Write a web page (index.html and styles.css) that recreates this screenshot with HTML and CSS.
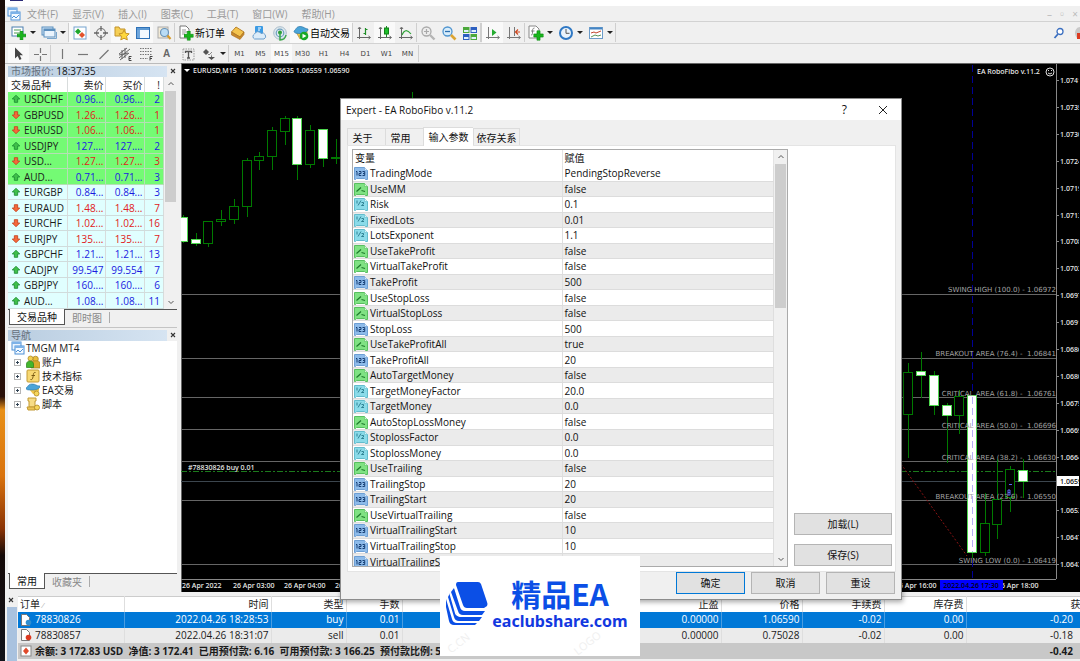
FILE: index.html
```html
<!DOCTYPE html>
<html lang="zh-CN">
<head>
<meta charset="utf-8">
<title>MetaTrader 4 - EURUSD,M15</title>
<link rel="stylesheet" href="styles.css">
</head>
<body>
<svg class="defs" aria-hidden="true">
  <symbol id="plus" viewBox="0 0 10 10"><path d="M3.500 0h3v3.500H10v3H6.500V10h-3V6.500H0v-3h3.500z" fill="#19b51c" stroke="#0a8a10" stroke-width=".7"/></symbol>
  <symbol id="i-newchart" viewBox="0 0 16 16"><rect x="1" y="2" width="11" height="9" fill="#fff" stroke="#4a7fae"/><path d="M3 5h7M3 8h6" stroke="#4b9a50"/><use href="#plus" x="6" y="6" width="9" height="9"/></symbol>
  <symbol id="i-profiles" viewBox="0 0 16 16"><rect x="1" y="2" width="11" height="8" fill="#cfe3f7" stroke="#5b8fbd"/><rect x="3" y="4" width="11" height="8" fill="#eaf4fd" stroke="#5b8fbd"/><path d="M3 5h11" stroke="#5b8fbd" stroke-width="2"/><path d="M6 13.500h9.500V7" fill="none" stroke="#7aa6cd"/></symbol>
  <symbol id="i-market" viewBox="0 0 16 16"><rect x="2" y="2" width="12" height="12" fill="#fff" stroke="#74a3cf"/><path d="M6 3.500l3 3-3 3-3-3z" fill="#1ea52b"/><path d="M10 7l3 3-3 3-3-3z" fill="#e2532b"/></symbol>
  <symbol id="i-target" viewBox="0 0 16 16"><circle cx="8" cy="8" r="4.500" fill="none" stroke="#777" stroke-width="1.200"/><path d="M8 1v5M8 10v5M1 8h5M10 8h5" stroke="#666" stroke-width="1.300"/></symbol>
  <symbol id="i-nav" viewBox="0 0 16 16"><path d="M1 2h4l1 2h5v7H1z" fill="#f6cf55" stroke="#c2932b"/><path d="M10 5l1.700 3.300 3.500.5-2.600 2.500.7 3.600L10 13.200 6.800 14.900l.7-3.600L5 8.800l3.500-.5z" fill="#ffd83e" stroke="#c6952a"/></symbol>
  <symbol id="i-terminal" viewBox="0 0 16 16"><rect x="1.500" y="2.500" width="13" height="11" fill="#f3f9ff" stroke="#2e71b7"/><path d="M2 4h12" stroke="#5e9ad3" stroke-width="2"/><rect x="2" y="5" width="3" height="8" fill="#6fa6dc"/></symbol>
  <symbol id="i-tester" viewBox="0 0 16 16"><rect x="2" y="2" width="10" height="11" fill="#f3ead6" stroke="#aaa"/><circle cx="8.500" cy="7.500" r="4" fill="#b9dcf5" stroke="#6a93b8" stroke-width="1.200"/><path d="M11.500 10.500l3 3.500" stroke="#d69a2b" stroke-width="2.200"/></symbol>
  <symbol id="i-order" viewBox="0 0 16 16"><path d="M2 1h6l3 3v9H2z" fill="#fff" stroke="#777"/><path d="M4 5h4M4 7h5M4 9h3" stroke="#999"/><use href="#plus" x="6" y="6" width="9.500" height="9.500"/></symbol>
  <symbol id="i-book" viewBox="0 0 16 16"><path d="M6 2l8 5-4 5-8.500-5z" fill="#f4c44e" stroke="#b9822a"/><path d="M1.500 7v3l8.500 4.500 4-5V7l-4 5z" fill="#c9892a" stroke="#a66f20" stroke-width=".6"/></symbol>
  <symbol id="i-cloud" viewBox="0 0 16 16"><rect x="4" y="1" width="8" height="9" rx="1" fill="#3c9be4"/><path d="M7 3h3M7 5h2" stroke="#fff"/><path d="M3.500 14a2.800 2.800 0 0 1 0-5 3.600 3.600 0 0 1 6.500-.5A3 3 0 0 1 13 14z" fill="#dcecf9" stroke="#6d9fcc"/></symbol>
  <symbol id="i-signal" viewBox="0 0 16 16"><circle cx="8" cy="8" r="6.300" fill="#dfe9ee" stroke="#a9bccb"/><circle cx="8" cy="8" r="3.800" fill="none" stroke="#6f9fc0" stroke-width="1.200"/><circle cx="8" cy="7.500" r="2" fill="#2b9e3a"/><path d="M8 8v7c3 0 5.500-2 6-5" fill="none" stroke="#3aa648" stroke-width="1.500"/></symbol>
  <symbol id="i-auto" viewBox="0 0 16 16"><path d="M3 7l4 7 7-5V6z" fill="#f0c54b" stroke="#b98d2c" stroke-width=".7"/><path d="M1 6c2-1 2-4.500 6-4.500S12 4 15 4c0 3-4 4.500-8 4.500S1 8 1 6z" fill="#4ba4d8" stroke="#2a75a8" stroke-width=".7"/><circle cx="11" cy="11" r="4.300" fill="#17a826"/><path d="M9.500 8.700v4.600l4-2.300z" fill="#fff"/></symbol>
  <symbol id="i-bars" viewBox="0 0 16 16"><path d="M3.500 3v11M1 12.500h13M2 4l1.500-2L5 4M12.500 11l2 1.500-2 1.500" fill="none" stroke="#666"/><path d="M9.500 3v7M7.500 8.500h2M9.500 4.500h2" stroke="#1e8e27" stroke-width="1.200" fill="none"/></symbol>
  <symbol id="i-candles" viewBox="0 0 16 16"><path d="M3.500 3v11M1 12.500h13M2 4l1.500-2L5 4M12.500 11l2 1.500-2 1.500" fill="none" stroke="#666"/><path d="M9.500 1v11" stroke="#1e8e27"/><rect x="7.500" y="3" width="4" height="6" fill="#1fbf2b" stroke="#128019"/></symbol>
  <symbol id="i-line" viewBox="0 0 16 16"><path d="M3.500 3v11M1 12.500h13M2 4l1.500-2L5 4M12.500 11l2 1.500-2 1.500" fill="none" stroke="#666"/><path d="M4 10c2-5 5-6 9-1" stroke="#2fa338" stroke-width="1.200" fill="none"/></symbol>
  <symbol id="i-zoomin" viewBox="0 0 16 16"><circle cx="6.500" cy="6.500" r="4.500" fill="#eee" stroke="#aaa" stroke-width="1.300"/><path d="M4 6.500h5M6.500 4v5" stroke="#aaa" stroke-width="1.200"/><path d="M10 10l4.500 4.500" stroke="#b5b5b5" stroke-width="2.400"/></symbol>
  <symbol id="i-zoomout" viewBox="0 0 16 16"><circle cx="6.500" cy="6.500" r="4.500" fill="#d8edfb" stroke="#4f94cf" stroke-width="1.300"/><path d="M4 6.500h5" stroke="#2a6eb0" stroke-width="1.300"/><path d="M10 10l4.500 4.500" stroke="#dba432" stroke-width="2.600"/></symbol>
  <symbol id="i-tile" viewBox="0 0 16 16"><rect x="1" y="2" width="6.500" height="6" fill="#4ba83b"/><rect x="8.500" y="2" width="6.500" height="6" fill="#2c5fc0"/><rect x="1" y="9" width="6.500" height="6" fill="#2c5fc0"/><rect x="8.500" y="9" width="6.500" height="6" fill="#4ba83b"/><path d="M2 6h4.500M9.500 6H14M2 13h4.500M9.500 13H14" stroke="#dff0ff" stroke-width="2"/></symbol>
  <symbol id="i-scroll" viewBox="0 0 16 16"><path d="M3.500 2v12M1 12.500h13M12.500 11l2 1.500-2 1.500" fill="none" stroke="#777"/><path d="M7 4v7l4.500-3.500z" fill="#27ad32"/></symbol>
  <symbol id="i-shift" viewBox="0 0 16 16"><path d="M3.500 2v12M1 12.500h13M12.500 11l2 1.500-2 1.500M8.500 2v9" fill="none" stroke="#777"/><path d="M14 7H9.500M12 4.500L9.500 7 12 9.500" stroke="#cf4a22" stroke-width="1.200" fill="none"/></symbol>
  <symbol id="i-indicator" viewBox="0 0 16 16"><path d="M1 1h7l3 3v9H1z" fill="#fff" stroke="#888"/><path d="M6.500 3C4.500 3 4.500 5 4.500 7s0 3-1.500 3M3 6h3.500" fill="none" stroke="#777" stroke-width=".9"/><use href="#plus" x="5.500" y="5.500" width="10" height="10"/></symbol>
  <symbol id="i-clock" viewBox="0 0 16 16"><circle cx="8" cy="8" r="6" fill="#e9f3fc" stroke="#2f78c4" stroke-width="2"/><path d="M8 4v4.300h3.500" fill="none" stroke="#555"/></symbol>
  <symbol id="i-template" viewBox="0 0 16 16"><rect x="1.500" y="2.500" width="13" height="11" fill="#fff" stroke="#6b9bc9"/><path d="M2 3.500h12" stroke="#4585c4" stroke-width="2"/><path d="M3 8l3-1 2 1 5-2" fill="none" stroke="#c2452d"/><path d="M3 12l4-2 3 1 3-1" fill="none" stroke="#5a9358"/></symbol>
  <symbol id="i-cursor" viewBox="0 0 16 16"><path d="M4 1.500v11l2.700-2.500 1.800 4 2-1-1.800-3.700H12z" fill="#444"/></symbol>
  <symbol id="i-cross" viewBox="0 0 16 16"><path d="M8.500 2v5M8.500 10v5M2 8.500h5M10 8.500h5" stroke="#777" stroke-width="1.200"/></symbol>
  <symbol id="i-vline" viewBox="0 0 16 16"><path d="M8.500 3v10" stroke="#777" stroke-width="1.200"/></symbol>
  <symbol id="i-hline" viewBox="0 0 16 16"><path d="M3 8.500h10" stroke="#777" stroke-width="1.200"/></symbol>
  <symbol id="i-trend" viewBox="0 0 16 16"><path d="M3.500 13l9-9" stroke="#777" stroke-width="1.200"/></symbol>
  <symbol id="i-channel" viewBox="0 0 16 16"><path d="M2 8l8-6M2 12L13 3M3 14l9-7M5 4v9M8 2v10M2 9l9-2" stroke="#666" fill="none"/><path d="M14.500 10.500H12v4h2.500M12 12.500h2" stroke="#444" fill="none"/></symbol>
  <symbol id="i-fibo" viewBox="0 0 16 16"><path d="M2 2.500h12M2 5.500h12M2 8.500h12M2 12.500h8" stroke="#777" stroke-dasharray="1.500 1"/><path d="M14.500 10.500H12v4M12 12.500h2" stroke="#444" fill="none"/></symbol>
  <symbol id="i-label" viewBox="0 0 16 16"><rect x="3" y="3" width="11" height="11" fill="none" stroke="#999" stroke-dasharray="1.500 1"/><path d="M5.500 7V5.500h6V7M8.500 5.500v6.500M7 12h3" fill="none" stroke="#555" stroke-width="1.300"/></symbol>
  <symbol id="i-arrows" viewBox="0 0 16 16"><path d="M5 3l3 3-3 3-3-3z" fill="#555"/><path d="M6 7l2 2 3-3" stroke="#888" fill="none"/><path d="M11 8v3h3l-3.500 3L7 11h3z" fill="#555"/></symbol>
  <symbol id="i-up" viewBox="0 0 12 12"><path d="M6 1.500l4.500 4.500H8v4H4V6H1.500z" fill="#3fc04a" stroke="#1b8a32"/></symbol>
  <symbol id="i-down" viewBox="0 0 12 12"><path d="M6 10.500L1.500 6H4V2h4v4h2.500z" fill="#f5683a" stroke="#c3411f"/></symbol>
  <symbol id="i-app" viewBox="0 0 14 14"><rect x="1" y="1" width="9" height="8" fill="#eaf4ff" stroke="#4c90d6"/><rect x="4" y="5" width="9" height="8" fill="#f5faff" stroke="#4c90d6"/><path d="M1 2h9M4 6h9" stroke="#7db2e8" stroke-width="2"/><path d="M5 11l2-2 2 2 3-3" fill="none" stroke="#4c90d6"/></symbol>
  <symbol id="i-accounts" viewBox="0 0 14 14"><circle cx="9.500" cy="4" r="2.800" fill="#e8bd3d" stroke="#a37f1d" stroke-width=".7"/><path d="M5 13V8c0-3 9-3 9 0v5z" fill="#d9a92c" stroke="#a37f1d" stroke-width=".7"/><circle cx="4.500" cy="3.500" r="2.500" fill="#f0cf52" stroke="#a37f1d" stroke-width=".7"/><path d="M.5 12.500V9c0-4 7-4 7 0v3.500z" fill="#43b62c" stroke="#29801b" stroke-width=".7"/></symbol>
  <symbol id="i-func" viewBox="0 0 14 14"><rect x="1" y="1" width="12" height="12" rx="1" fill="#f7d873" stroke="#c39a35"/><path d="M9.500 3.500C7 3 7.500 6 7 8s-1 3-2.500 2.500M5.500 6.500H9" fill="none" stroke="#7a5a14"/></symbol>
  <symbol id="i-ea" viewBox="0 0 14 14"><path d="M3 6l4 5 6-3V5z" fill="#f0c54b"/><path d="M0 5c2-1 2-4 6-4s4 2 8 2c0 3-4 4-8 4S0 7 0 5z" fill="#4ba4d8" stroke="#2a75a8" stroke-width=".6"/><circle cx="10.500" cy="10.500" r="2.500" fill="#f6d65b" stroke="#ad8421" stroke-width=".8"/></symbol>
  <symbol id="i-script" viewBox="0 0 14 14"><path d="M2 1h8v3H9v6H3V4H2z" fill="#f7dc85" stroke="#c39a35"/><path d="M1 10h8v3H2z" fill="#edc555" stroke="#c39a35"/><circle cx="11" cy="10.500" r="2.500" fill="#f6d65b" stroke="#ad8421" stroke-width=".8"/></symbol>
  <symbol id="i-int" viewBox="0 0 14 14"><path d="M.5 1.500h10l3 3v9h-2l-1-1h-8l-1 1h-1z" fill="#8dbbea" stroke="#6d9fd4"/><path d="M10.500 1.500v3h3" fill="#d9eaf9" stroke="#6d9fd4" stroke-width=".6"/><path d="M2 5.500h1v4M5 5.500h2v2H5v2h2.300M8.500 5.500h2.200v4H8.500M9 7.500h1.500" fill="none" stroke="#173f74"/></symbol>
  <symbol id="i-bool" viewBox="0 0 14 14"><path d="M.5 1.500h10l3 3v9h-2l-1-1h-8l-1 1h-1z" fill="#7fe283" stroke="#58bf60"/><path d="M10.500 1.500v3h3" fill="#d5f7d6" stroke="#58bf60" stroke-width=".6"/><path d="M2.500 9.500l4.500-4M7.500 8.500l3.500 1" stroke="#1d7a2b" stroke-width="1.200"/></symbol>
  <symbol id="i-dbl" viewBox="0 0 14 14"><path d="M.5 1.500h10l3 3v9h-2l-1-1h-8l-1 1h-1z" fill="#8adbe9" stroke="#62bccd"/><path d="M10.500 1.500v3h3" fill="#d5f4f8" stroke="#62bccd" stroke-width=".6"/><path d="M3 3.500v3M4 8.500l3-5M7.500 5.500h2v1.500l-2 1.500h2.500" fill="none" stroke="#25798b" stroke-width=".9"/></symbol>
  <symbol id="i-doc" viewBox="0 0 12 12"><path d="M1.500.5h5l3 3v8h-8z" fill="#fff" stroke="#777"/><circle cx="8.500" cy="8.500" r="2.800" fill="currentColor"/></symbol>
  <symbol id="i-balance" viewBox="0 0 12 12"><rect x="1" y="1" width="10" height="10" fill="#fff" stroke="#888"/><path d="M6 2.500l3 3.500-3 3.500L3 6z" fill="#e04a2b"/></symbol>
  <symbol id="i-search" viewBox="0 0 12 12"><circle cx="7" cy="4.500" r="3" fill="#fff" stroke="#3b6fc0" stroke-width="1.300"/><path d="M5 7l-3.500 4" stroke="#3b6fc0" stroke-width="1.800"/></symbol>
  <symbol id="i-bell" viewBox="0 0 6 12"><path d="M6 0C3 0 1 3 1 6s2 6 5 6z" fill="#c9c9c9"/><rect x="3" y="6" width="3" height="6" fill="#dc3a20"/></symbol>
  <symbol id="i-chevup" viewBox="0 0 8 8"><path d="M1.500 5L4 2.500 6.500 5" fill="none" stroke="#555"/></symbol>
  <symbol id="i-chevdown" viewBox="0 0 8 8"><path d="M1.500 3L4 5.500 6.500 3" fill="none" stroke="#555"/></symbol>
  <symbol id="i-close" viewBox="0 0 8 8"><path d="M2 2l4 4M6 2L2 6" stroke="#333" stroke-width="1.100"/></symbol>
</svg>

<div class="desktop">
  <div class="wallpaper"></div>
  <div class="app">
    <div class="app-title"><span class="app-mark"></span></div>
    <nav class="menu">
      <svg class="ic14"><use href="#i-app"/></svg>
      <button>文件(F)</button><button>显示(V)</button><button>插入(I)</button><button>图表(C)</button><button>工具(T)</button><button>窗口(W)</button><button>帮助(H)</button>
      <span class="mdi">– &nbsp;▫ &nbsp;×</span>
    </nav>
    <div class="toolbar" id="toolbar-main"></div>
    <div class="toolbar toolbar-small" id="toolbar-draw"></div>

    <div class="main">
      <aside class="side">
        <section class="panel quotes-panel">
          <header class="panel-title"><h2>市场报价: <b>18:37:35</b></h2><button aria-label="关闭市场报价"><svg class="ic8"><use href="#i-close"/></svg></button></header>
          <div class="panel-scroll">
            <table class="quotes">
              <thead><tr><th>交易品种</th><th>卖价</th><th>买价</th><th>!</th></tr></thead>
              <tbody id="quotes"></tbody>
            </table>
            <div class="scroll"><svg class="ic8"><use href="#i-chevup"/></svg><i class="thumb thumb-quotes"></i><svg class="ic8 scroll-end"><use href="#i-chevdown"/></svg></div>
          </div>
          <div class="tabs-bottom"><button class="on">交易品种</button><button>即时图</button></div>
        </section>
        <section class="panel nav-panel">
          <header class="panel-title"><h2>导航</h2><button aria-label="关闭导航"><svg class="ic8"><use href="#i-close"/></svg></button></header>
          <ul class="tree">
            <li><svg class="ic14"><use href="#i-app"/></svg>TMGM MT4</li>
            <li class="child"><i class="expand"></i><svg class="ic14"><use href="#i-accounts"/></svg>账户</li>
            <li class="child"><i class="expand"></i><svg class="ic14"><use href="#i-func"/></svg>技术指标</li>
            <li class="child"><i class="expand"></i><svg class="ic14"><use href="#i-ea"/></svg>EA交易</li>
            <li class="child"><i class="expand"></i><svg class="ic14"><use href="#i-script"/></svg>脚本</li>
          </ul>
          <div class="tabs-bottom"><button class="on">常用</button><button>收藏夹</button></div>
        </section>
      </aside>
      <div class="chart">
        <svg class="chart-svg" role="img" aria-label="EURUSD M15">
          <svg width="100%" height="100%" id="levels"></svg>
          <g transform="translate(-181 -63)" id="chart-left"></g>
          <svg x="100%" overflow="visible"><g transform="translate(-1080 -63)" id="chart-right"></g></svg>
        </svg>
      </div>
    </div>

    <section class="terminal">
      <div class="terminal-rail"><button aria-label="关闭终端"><svg class="ic8"><use href="#i-close"/></svg></button><i></i></div>
      <table class="orders">
        <colgroup><col class="c106"><col class="c147"><col class="c75"><col class="c56"><col class="c82"><col><col class="c81"><col class="c82"><col class="c82"><col class="c114"></colgroup>
        <thead><tr><th>订单 <small>⁄</small></th><th>时间</th><th>类型</th><th>手数</th><th>交易品种</th><th>止盈</th><th>价格</th><th>手续费</th><th>库存费</th><th class="cut">获利</th></tr></thead>
        <tbody>
          <tr class="selected"><td><span><svg class="ic12 blue"><use href="#i-doc"/></svg>78830826</span></td><td>2022.04.26 18:28:53</td><td>buy</td><td>0.01</td><td></td><td>0.00000</td><td>1.06590</td><td>-0.02</td><td>0.00</td><td>-0.20</td></tr>
          <tr><td><span><svg class="ic12 red"><use href="#i-doc"/></svg>78830857</span></td><td>2022.04.26 18:31:07</td><td>sell</td><td>0.01</td><td></td><td>0.00000</td><td>0.75028</td><td>-0.02</td><td>0.00</td><td>-0.18</td></tr>
          <tr class="total"><td colspan="9"><span><svg class="ic12"><use href="#i-balance"/></svg>余额: 3 172.83 USD&nbsp; 净值: 3 172.41&nbsp; 已用预付款: 6.16&nbsp; 可用预付款: 3 166.25&nbsp; 预付款比例: 51501.79%</span></td><td>-0.42</td></tr>
        </tbody>
      </table>
    </section>
  </div>

  <div class="dialog" role="dialog" aria-labelledby="dlg-title">
    <header class="dialog-title"><h1 id="dlg-title">Expert - EA RoboFibo v.11.2</h1><button>?</button><button aria-label="关闭"><svg class="ic12"><path d="M2 2l8 8M10 2l-8 8" stroke="#222"/></svg></button></header>
    <div class="dialog-body">
      <div class="tabs-top"><button>关于</button><button>常用</button><button class="on">输入参数</button><button class="wide">依存关系</button></div>
      <div class="pane">
        <div class="param-box">
          <div class="param-view">
            <table class="params">
              <thead><tr><th>变量</th><th>赋值</th></tr></thead>
              <tbody id="params"></tbody>
            </table>
          </div>
          <div class="scroll"><svg class="ic8"><use href="#i-chevup"/></svg><i class="thumb thumb-params"></i><svg class="ic8 scroll-end"><use href="#i-chevdown"/></svg></div>
        </div>
        <div class="pane-actions"><button class="btn">加载(L)</button><button class="btn">保存(S)</button></div>
      </div>
      <footer class="dialog-actions"><button class="btn default">确定</button><button class="btn">取消</button><button class="btn">重设</button></footer>
    </div>
  </div>

  <div class="brand">
    <span class="mark mark-a">C.CN</span><span class="mark mark-b">LOGO</span>
    <svg class="brand-logo" viewBox="0 0 42 44"><g fill="#0b4fe6"><path d="M12 1h20q2 0 3 2l6 18q1 2 0 4l-3 2H21q-3 0-4-3L10 4q0-3 2-3z"/><path d="M8 7l6 19q1 4 5 4h20l-3 4H17q-4 0-5-4L5 11z"/><path d="M4 12l6 20q1 4 5 4h21l-3 4H13q-4 0-5-4L2 16z"/><path d="M0 18l6 20q1 4 5 4h20l-2 2H8q-4 0-5-4L0 26z"/></g><path d="M9 6l7 21q1 2 4 2h20M4 12l6 21q1 2 4 2h22" fill="none" stroke="#fff" stroke-width="1.500"/></svg>
    <div class="brand-text"><strong>精品EA</strong><span>eaclubshare.com</span></div>
  </div>
</div>
<script src="script.js"></script>
</body>
</html>
```
FILE: styles.css
```css
* { box-sizing: border-box; }
body { margin: 0; overflow: hidden; background: #f0f0f0; color: #1a1a1a; font: 10px/14px "Open Sans", "Noto Sans CJK SC", sans-serif; }
button { border: 0; background: none; padding: 0; margin: 0; font: inherit; color: inherit; white-space: nowrap; }
h1, h2 { margin: 0; font: inherit; }
table { border-collapse: collapse; table-layout: fixed; }
th, td { padding: 0; font-weight: normal; overflow: hidden; white-space: nowrap; }
svg { display: block; flex: none; }
.defs { position: absolute; width: 0; height: 0; }
.ic8 { width: 8px; height: 8px; }
.ic10 { width: 10px; height: 10px; }
.ic12 { width: 12px; height: 12px; }
.ic14 { width: 14px; height: 14px; }
.ic16 { width: 16px; height: 16px; }

.desktop { position: relative; display: grid; grid-template-columns: 5px minmax(0, 1fr); height: 100vh; }
.wallpaper { background: linear-gradient(#1b0e09 0, #2a150c 15%, #160b07 40%, #2a1009 60%, #e89018 62%, #d9730e 72%, #8a3305 80%, #150a08 84%, #11131a 100%); }
.app { display: flex; flex-direction: column; min-width: 0; background: #f0f0f0; }
.app-title { height: 6px; background: #fff; padding-left: 5px; }
.app-mark { display: block; width: 13px; height: 1px; background: #2b2b78; }

.menu { display: flex; align-items: center; gap: 14px; height: 15px; padding-left: 2px; color: #999; }
.menu svg { margin-right: -8px; }
.menu button { line-height: 14px; }
.mdi { margin-left: auto; padding-right: 2px; color: #bbb; }

.toolbar { display: flex; align-items: stretch; height: 22px; border-top: 1px solid #d2d2d2; padding-left: 3px; }
.toolbar-small { height: 20px; }
.tb { display: flex; align-items: center; justify-content: center; width: 21px; }
.tb.checked { background: #f9f9f9; }
.tb.drop { width: 30px; gap: 3px; }
.tb.drop::after { content: ""; border: 3px solid transparent; border-top-color: #222; border-bottom: 0; }
.tb.text { width: auto; gap: 1px; padding: 0 2px 0 3px; color: #000; }
.tb.frame { font: 7px/10px "DejaVu Sans", sans-serif; color: #444; }
.tb.letter { font: bold 10px/12px "Liberation Sans", sans-serif; color: #666; }
.tb-sep { width: 1px; margin: 1px 0; background: #cfcfcf; }
.tb-end { margin-left: auto; display: flex; align-items: center; gap: 9px; }
.tb-end .bell { width: 6px; height: 12px; }

.main { display: flex; flex: 1; min-height: 0; }
.side { display: flex; flex-direction: column; width: 176px; padding: 1px 4px 3px 3px; border-top: 1px solid #bbb; }
.panel { display: flex; flex-direction: column; }
.nav-panel { flex: 1; border-top: 1px solid #c4c4c4; margin-top: 2px; padding-top: 1px; min-height: 0; }
.panel-title { display: flex; align-items: center; height: 12px; }
.panel-title h2 { flex: 1; height: 11px; line-height: 11px; padding-left: 3px; margin-right: 2px; background: linear-gradient(90deg, #b9cde0, #d6e4f2); color: #66707c; font-size: 10px; }
.panel-title b { color: #111; font-weight: normal; }
.panel-title button { width: 8px; }
.panel-scroll { display: flex; background: #fff; }
.quotes { flex: 1; width: 100%; height: 232px; }
.quotes th, .quotes td { text-align: right; line-height: 14px; padding-right: 1px; }
.quotes th:last-child, .quotes td:last-child { padding-right: 3px; }
.quotes thead th { height: 15px; background: #fff; }
.quotes th:first-child { width: 59px; padding-left: 3px; }
.quotes th:nth-child(2) { width: 38px; }
.quotes th:nth-child(3) { width: 39px; }
.quotes th:first-child, .quotes td:first-child { text-align: left; padding-right: 0; }
.quotes td, .quotes th { border-right: 1px solid #d8dcdc; }
.quotes td { background: #e0ffff; border-bottom: 1px solid #d0dcdc; color: #1a1ae0; }
.quotes .hot td { background: #74fb74; border-color: #b5dfb5; }
.quotes .fall td { color: #e02020; }
.quotes tbody td:first-child { color: #1a1a1a; }
.quotes span, .params span, .orders span { display: flex; align-items: center; gap: 3px; }
.quotes span { height: 14px; padding-left: 3px; }
.scroll { display: flex; flex-direction: column; align-items: center; width: 13px; padding: 3px 0; background: #f0f0f0; }
.thumb { width: 11px; margin-top: 3px; background: #cdcdcd; }
.thumb-quotes { height: 111px; }
.thumb-params { height: 144px; }
.scroll-end { margin-top: auto; }
.tabs-bottom { display: flex; height: 16px; border-top: 1px solid #555; color: #888; }
.tabs-bottom button { padding: 0 7px; margin: 2px 0; border-right: 1px solid #aaa; line-height: 10px; }
.tabs-bottom .on { margin: -1px 0 0 1px; background: #fff; color: #111; border: solid #555; border-width: 0 1px 1px; }

.tree { flex: 1; margin: 0; padding: 0 0 0 3px; list-style: none; background: #fff; }
.tree li { display: flex; align-items: center; gap: 1px; height: 14px; }
.tree .child { padding-left: 3px; gap: 2px; }
.expand { width: 7px; height: 7px; margin-right: 3px; border: 1px solid #b5b5b5; background: linear-gradient(#345, #345) center / 3px 1px no-repeat, linear-gradient(#345, #345) center / 1px 3px no-repeat; }

.chart { flex: 1; min-width: 0; border: 1px solid #666; border-right: 0; border-bottom: 0; background: #000; }
.chart-svg { width: 100%; height: 100%; overflow: hidden; margin: -1px; font: 500 7px "Noto Sans", sans-serif; fill: #eee; }
.chart-svg .lv { stroke: #666; }
.chart-svg .fib { fill: #a2a2a2; text-anchor: end; font-family: "DejaVu Sans", sans-serif; }
.chart-svg .hollow { fill: #000; stroke: #007a00; }
.chart-svg .solid { fill: #fff; stroke: #4fd84f; }
.chart-svg .wick { stroke: #007a00; }

.terminal { display: flex; height: 69px; padding: 4px 0 2px 2px; }
.terminal-rail { display: flex; flex-direction: column; width: 11px; gap: 3px; }
.terminal-rail button { height: 8px; }
.terminal-rail i { flex: 1; width: 10px; margin-bottom: -2px; background: #a9c2df; }
.orders { flex: 1; min-width: 0; width: 100%; height: 63px; border-top: 1px solid #ccc; }
.c106 { width: 106px; } .c147 { width: 147px; } .c75 { width: 75px; } .c56 { width: 56px; }
.c82 { width: 82px; } .c81 { width: 81px; } .c114 { width: 114px; }
.orders th, .orders td { text-align: right; padding-right: 2px; border-right: 1px solid #dedede; line-height: 15px; height: 15px; }
.orders th { background: #fff; }
.orders th:first-child, .orders td:first-child { text-align: left; padding-left: 2px; }
.orders td { background: #ebebeb; }
.orders td:last-child { padding-right: 7px; border: 0; }
.orders .cut { padding: 0 0 0 104px; text-align: left; border: 0; }
.orders small { color: #aaa; font-size: 8px; }
.orders .selected td { background: #0078d7; color: #fff; border-color: #4a9ce0; }
.orders .total td { background: #c8c8c8; font-weight: bold; border: 0; }
.blue { color: #2f8ed0; }
.red { color: #dc3a20; }

.dialog { position: absolute; left: 340px; top: 98px; width: 562px; border: 1px solid #8c8c8c; background: #f0f0f0; box-shadow: 1px 2px 5px rgba(0, 0, 0, .35); color: #111; }
.dialog-title { display: flex; align-items: center; height: 21px; background: #fff; padding: 0 12px 0 5px; gap: 30px; }
.dialog-title h1 { flex: 1; }
.dialog-title button { font-size: 12px; }
.dialog-body { padding: 7px 5px 5px 6px; }
.tabs-top { display: flex; align-items: flex-end; height: 18px; }
.tabs-top button { width: 38px; height: 17px; padding: 1px 8px 0 0; border: 1px solid #dcdcdc; border-right: 0; border-bottom: 0; line-height: 12px; }
.tabs-top .on { width: 50px; height: 19px; margin-bottom: -1px; padding: 0; background: #fff; }
.tabs-top .wide { width: 47px; padding-right: 0; border-right: 1px solid #dcdcdc; }
.pane { display: flex; gap: 6px; padding: 3px 3px 4px 4px; border: 1px solid #e4e4e4; background: #fff; }
.param-box { display: flex; flex: 1; height: 418px; border: 1px solid #aaa; }
.param-view { flex: 1; overflow: hidden; }
.params { width: 100%; height: 420px; }
.params th { height: 16px; text-align: left; padding-left: 2px; border-right: 1px solid #e4e4e4; }
.params td { line-height: 14px; padding-left: 2px; border-right: 1px solid #dedede; border-bottom: 1px solid #dcdcdc; }
.params td:first-child { padding-left: 1px; }
.params span { height: 14px; gap: 2px; }
.params th:first-child { width: 209px; }
.params tr:nth-child(even) td { background: #ebebeb; }
.pane-actions { display: flex; flex-direction: column; justify-content: flex-end; gap: 9px; width: 98px; padding-bottom: 1px; }
.btn { height: 22px; border: 1px solid #b4b4b4; background: #e1e1e1; }
.btn.default { border-color: #0078d7; }
.dialog-actions { display: flex; justify-content: flex-end; gap: 6px; padding-right: 1px; }
.dialog-actions .btn { width: 69px; }

.brand { position: absolute; left: 440px; top: 556px; display: flex; align-items: center; gap: 3px; width: 200px; height: 100px; padding: 0 11px 6px 6px; background: #fff; overflow: hidden; }
.brand-logo { width: 42px; height: 44px; }
.brand-text { flex: 1; display: flex; flex-direction: column; align-items: center; color: #0b4fe6; font-weight: bold; }
.brand-text strong { font: 700 30px/36px "Noto Sans CJK SC", sans-serif; }
.brand-text span { font: 700 16px/20px "Noto Sans", sans-serif; color: #1238e0; }
.mark { position: absolute; color: #f0f0f0; font-size: 11px; transform: rotate(-38deg); }
.mark-a { left: 6px; top: 80px; }
.mark-b { left: 132px; top: 80px; }
```
FILE: script.js
```js
const el = id => document.getElementById(id);
const icon = (name, size = 16) => `<svg class="ic${size}"><use href="#i-${name}"/></svg>`;

/* Toolbars: "|" is a separator, flags follow the icon name. */
const tool = spec => {
  if (spec === '|') return '<i class="tb-sep"></i>';
  const [name, flags = '', text = ''] = spec.split(':');
  const body = flags.includes('frame') || flags.includes('letter') ? name : icon(name) + text;
  return `<button class="tb ${flags}">${body}</button>`;
};
el('toolbar-main').innerHTML = ['newchart:drop', 'profiles:drop', '|', 'market:checked', 'target', 'nav:checked', 'terminal:checked', 'tester', '|',
  'order:text:新订单', 'book', 'cloud', 'signal', 'auto:text checked:自动交易', '|', 'bars', 'candles:checked', 'line', '|',
  'zoomin', 'zoomout', 'tile', '|', '|', 'scroll:checked', 'shift', '|', 'indicator:drop', 'clock:drop', 'template:drop', '|']
  .map(tool).join('') + `<span class="tb-end">${icon('search', 12)}<svg class="bell"><use href="#i-bell"/></svg></span>`;
el('toolbar-draw').innerHTML = ['cursor:checked', 'cross', '|', 'vline', 'hline', 'trend', 'channel', 'fibo', 'A:letter', 'label', 'arrows:drop', '|',
  'M1:frame', 'M5:frame', 'M15:frame checked', 'M30:frame', 'H1:frame', 'H4:frame', 'D1:frame', 'W1:frame', 'MN:frame', '|'].map(tool).join('');

const quotes = `USDCHF 0.96... 0.96... 2 u
GBPUSD 1.26... 1.26... 1 d
EURUSD 1.06... 1.06... 1 d
USDJPY 127.... 127.... 2 u
USD... 1.27... 1.27... 3 d
AUD... 0.71... 0.71... 3 u
EURGBP 0.84... 0.84... 3 u
EURAUD 1.48... 1.48... 7 d
EURCHF 1.02... 1.02... 16 d
EURJPY 135.... 135.... 7 d
GBPCHF 1.21... 1.21... 13 u
CADJPY 99.547 99.554 7 u
GBPJPY 160.... 160.... 6 u
AUD... 1.08... 1.08... 11 u`;
el('quotes').innerHTML = quotes.split('\n').map((line, i) => {
  const [s, bid, ask, spread, dir] = line.split(' ');
  return `<tr class="${i < 6 ? 'hot' : ''} ${dir === 'd' ? 'fall' : ''}"><td><span>${icon(dir === 'd' ? 'down' : 'up', 10)}${s}</span></td><td>${bid}</td><td>${ask}</td><td>${spread}</td></tr>`;
}).join('');

const params = `int TradingMode PendingStopReverse
bool UseMM false
dbl Risk 0.1
dbl FixedLots 0.01
dbl LotsExponent 1.1
bool UseTakeProfit false
bool VirtualTakeProfit false
int TakeProfit 500
bool UseStopLoss false
bool VirtualStopLoss false
int StopLoss 500
bool UseTakeProfitAll true
int TakeProfitAll 20
bool AutoTargetMoney false
dbl TargetMoneyFactor 20.0
dbl TargetMoney 0.0
bool AutoStopLossMoney false
dbl StoplossFactor 0.0
dbl StoplossMoney 0.0
bool UseTrailing false
int TrailingStop 20
int TrailingStart 20
bool UseVirtualTrailing false
int VirtualTrailingStart 10
int VirtualTrailingStop 10
int VirtualTrailingStep 1`;
el('params').innerHTML = params.split('\n').map(line => {
  const [type, name, value] = line.split(' ');
  return `<tr><td><span>${icon(type, 14)}${name}</span></td><td>${value}</td></tr>`;
}).join('');

/* Candles: [left, top, bottom, wick top, wick bottom, filled] */
const candle = ([x, t, b, wt, wb, solid]) =>
  `<path class="wick" d="M${x + 5}.5 ${wt}V${t}M${x + 5}.5 ${b}V${wb}"/><rect class="${solid ? 'solid' : 'hollow'}" x="${x}.5" y="${t}.5" width="9" height="${b - t}"/>`;
const text = (x, y, s, c = '') => `<text x="${x}" y="${y}" class="${c}">${s}</text>`;

el('levels').innerHTML = [294, 358, 397, 429, 461, 500, 564].map(y => `<line class="lv" x1="0" x2="100%" y1="${y - 62.5}" y2="${y - 62.5}"/>`).join('') +
  '<line x1="0" x2="100%" y1="408.500" y2="408.500" stroke="#1c7a1c" stroke-dasharray="6 2 2 2"/>' +
  '<line x1="0" x2="100%" y1="418.500" y2="418.500" stroke="#3c464e"/><line x1="0" x2="100%" y1="516.500" y2="516.500" stroke="#888"/>';

el('chart-left').innerHTML = [[178, 217, 241, 215, 243, 1], [191, 239, 243, 233, 246, 1], [203, 221, 243, 221, 247], [216, 219, 221, 210, 226],
  [229, 206, 219, 199, 224], [242, 160, 206, 158, 217], [254, 156, 160, 152, 170], [267, 130, 156, 127, 170], [280, 118, 131, 116, 145],
  [292, 118, 164, 116, 180, 1], [305, 130, 164, 125, 168], [318, 129, 158, 129, 167, 1], [331, 157, 158, 139, 164], [407, 110, 120, 92, 130]].map(candle).join('') +
  '<path d="M184 69h6l-3 3z" fill="#fff"/>' + text(193, 73, 'EURUSD,M15&nbsp; 1.06612 1.06635 1.06559 1.06590') +
  text(188, 470, '#78830826 buy 0.01') + text(182, 588, '26 Apr 2022') + text(233, 588, '26 Apr 03:00') + text(284, 588, '26 Apr 04:00') + text(335, 588, '26 Apr 05:00');

const prices = [];
for (let i = 0; i < 19; i++) if (i !== 15) prices.push(text(1061, Math.round(83 + i * 26.9), (1.0741 - i * 0.00055).toFixed(5)) +
  `<path d="M1057 ${Math.round(80 + i * 26.9)}.5h3" stroke="#888"/>`);
el('chart-right').innerHTML = '<path d="M973.5 65V579" stroke="#000096" stroke-dasharray="7 4"/>' +
  '<path d="M902 464L968 556" stroke="#8a1414" stroke-dasharray="2 2"/>' +
  [[904, 372, 414, 363, 458], [917, 371, 375, 352, 398, 1], [930, 375, 405, 371, 415, 1], [943, 405, 415, 403, 463, 1], [955, 396, 415, 390, 434],
    [968, 395, 552, 395, 558, 1], [981, 523, 552, 493, 556], [993, 499, 524, 459, 539], [1006, 469, 497, 466, 512], [1019, 470, 481, 459, 498, 1]].map(candle).join('') +
  '<path d="M973.5 397V552" stroke="#b4b0f4" stroke-dasharray="7 4"/>' +
  [[292, 'SWING HIGH (100.0) - 1.06972'], [356, 'BREAKOUT AREA (76.4) -&nbsp; 1.06841'], [396, 'CRITICAL AREA (61.8) -&nbsp; 1.06761'], [428, 'CRITICAL AREA (50.0) -&nbsp; 1.06696'],
    [460, 'CRITICAL AREA (38.2) -&nbsp; 1.06630'], [499, 'BREAKOUT AREA (23.6) -&nbsp; 1.06550'], [563, 'SWING LOW (0.0) - 1.06419']].map(([y, s]) => text(1057, y, s, 'fib')).join('') +
  '<path d="M1009 490v5h2v-5zM1009 492.500h2M1010 484.500h3" stroke="#5868f0" fill="none"/>' +
  '<rect x="1057" y="64" width="23" height="528" fill="#000"/><path d="M1057.5 64V579" stroke="#888"/>' + prices.join('') +
  '<rect x="1058" y="476" width="22" height="10" fill="#fff"/><text x="1061" y="484" fill="#000">1.06590</text>' +
  text(978, 74, 'EA RoboFibo v.11.2') +
  '<circle cx="1051" cy="72" r="4" fill="none" stroke="#ddd"/><path d="M1049.500 70v1M1052.500 70v1M1049 73q2 2 4 0" fill="none" stroke="#ddd"/>' +
  text(896, 588, '26 Apr 16:00') + text(998, 588, '26 Apr 18:00') +
  '<rect x="941" y="580" width="63" height="10" fill="#00f"/><text x="972" y="588" text-anchor="middle" fill="#000">2022.04.26 17:30</text>';
```
